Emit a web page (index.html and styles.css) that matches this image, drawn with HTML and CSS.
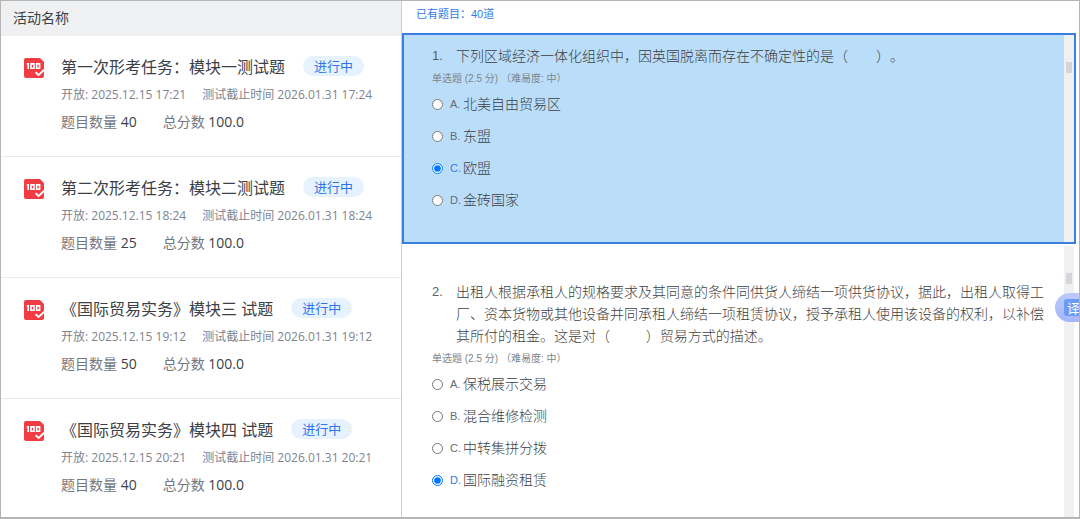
FILE: index.html
```html
<!DOCTYPE html>
<html lang="zh-CN">
<head>
  <meta charset="UTF-8">
  <meta name="viewport" content="width=device-width, initial-scale=1.0">
  <title>形考任务</title>
  <link rel="stylesheet" href="styles.css">
</head>
<body>
  <svg class="sprite" width="0" height="0" aria-hidden="true">
    <symbol id="icon-exam" viewBox="0 0 22 22">
      <path d="M3 1H17L21 5V19Q21 21 19 21H3Q1 21 1 19V3Q1 1 3 1Z" fill="#f23c43"/>
      <path d="M3.8 6.9H5.2V12M8 6.9H11V11.2H8ZM13.6 6.9H16.6V11.2H13.6Z" fill="none" stroke="#fff" stroke-width="1.6"/>
      <path d="M12.5 15.2L15.6 18L21.6 12.4" fill="none" stroke="#fff" stroke-width="1.9"/>
    </symbol>
  </svg>

  <div class="page">
    <section class="activities">
      <h2 class="activities-head">活动名称</h2>
      <ul class="activity-list">
        <li class="activity">
          <svg class="activity-icon"><use href="#icon-exam"/></svg>
          <div class="activity-body">
            <div class="activity-title"><span>第一次形考任务：模块一测试题</span><span class="badge">进行中</span></div>
            <div class="activity-time"><span>开放: 2025.12.15 17:21</span><span>测试截止时间 2026.01.31 17:24</span></div>
            <div class="activity-stats"><span>题目数量 <b>40</b></span><span>总分数 <b>100.0</b></span></div>
          </div>
        </li>
        <li class="activity">
          <svg class="activity-icon"><use href="#icon-exam"/></svg>
          <div class="activity-body">
            <div class="activity-title"><span>第二次形考任务：模块二测试题</span><span class="badge">进行中</span></div>
            <div class="activity-time"><span>开放: 2025.12.15 18:24</span><span>测试截止时间 2026.01.31 18:24</span></div>
            <div class="activity-stats"><span>题目数量 <b>25</b></span><span>总分数 <b>100.0</b></span></div>
          </div>
        </li>
        <li class="activity">
          <svg class="activity-icon"><use href="#icon-exam"/></svg>
          <div class="activity-body">
            <div class="activity-title"><span>《国际贸易实务》模块三 试题</span><span class="badge">进行中</span></div>
            <div class="activity-time"><span>开放: 2025.12.15 19:12</span><span>测试截止时间 2026.01.31 19:12</span></div>
            <div class="activity-stats"><span>题目数量 <b>50</b></span><span>总分数 <b>100.0</b></span></div>
          </div>
        </li>
        <li class="activity">
          <svg class="activity-icon"><use href="#icon-exam"/></svg>
          <div class="activity-body">
            <div class="activity-title"><span>《国际贸易实务》模块四 试题</span><span class="badge">进行中</span></div>
            <div class="activity-time"><span>开放: 2025.12.15 20:21</span><span>测试截止时间 2026.01.31 20:21</span></div>
            <div class="activity-stats"><span>题目数量 <b>40</b></span><span>总分数 <b>100.0</b></span></div>
          </div>
        </li>
      </ul>
    </section>

    <main class="questions">
      <div class="questions-head"><span>已有题目：</span><span>40道</span></div>

      <form class="question selected">
        <div class="question-body">
          <div class="question-text">
            <span class="question-no">1.</span>
            <p>下列区域经济一体化组织中，因英国脱离而存在不确定性的是（　　）。</p>
          </div>
          <div class="question-info">单选题 (2.5 分) （难易度: 中）</div>
          <label class="option"><input type="radio" name="q1"><span class="letter">A.</span><span>北美自由贸易区</span></label>
          <label class="option"><input type="radio" name="q1"><span class="letter">B.</span><span>东盟</span></label>
          <label class="option"><input type="radio" name="q1" checked><span class="letter">C.</span><span>欧盟</span></label>
          <label class="option"><input type="radio" name="q1"><span class="letter">D.</span><span>金砖国家</span></label>
        </div>
        <div class="scroll"><div class="thumb"></div></div>
      </form>

      <form class="question">
        <div class="question-body">
          <div class="question-text">
            <span class="question-no">2.</span>
            <p>出租人根据承租人的规格要求及其同意的条件同供货人缔结一项供货协议，据此，出租人取得工厂、资本货物或其他设备并同承租人缔结一项租赁协议，授予承租人使用该设备的权利，以补偿其所付的租金。这是对（　　&nbsp;&nbsp;）贸易方式的描述。</p>
          </div>
          <div class="question-info">单选题 (2.5 分) （难易度: 中）</div>
          <label class="option"><input type="radio" name="q2"><span class="letter">A.</span><span>保税展示交易</span></label>
          <label class="option"><input type="radio" name="q2"><span class="letter">B.</span><span>混合维修检测</span></label>
          <label class="option"><input type="radio" name="q2"><span class="letter">C.</span><span>中转集拼分拨</span></label>
          <label class="option"><input type="radio" name="q2" checked><span class="letter">D.</span><span>国际融资租赁</span></label>
        </div>
        <div class="scroll"><div class="thumb"></div></div>
      </form>

      <button type="button" class="translate" aria-label="翻译"><span>译</span></button>
    </main>
  </div>
</body>
</html>
```

FILE: styles.css
```css
* {
  box-sizing: border-box;
}
body {
  margin: 0;
  background: #fff;
  color: #3c3f45;
  font-family: "Open Sans", "Noto Sans CJK SC", sans-serif;
}
h2, p, ul {
  margin: 0;
  padding: 0;
}
.sprite {
  position: absolute;
}
.page {
  display: flex;
  min-height: 100vh;
  border: 1px solid #b5b5b5;
  border-bottom-width: 2px;
}

/* activity list */
.activities {
  flex: 0 0 401px;
  border-right: 1px solid #cfcfcf;
}
.activities-head {
  padding: 0 12px;
  background: #eff0f1;
  font-size: 14px;
  font-weight: 400;
  line-height: 34px;
  padding-bottom: 1px;
}
.activity-list {
  list-style: none;
}
.activity {
  display: flex;
  gap: 16px;
  padding: 19px 10px 24px 22px;
  border-bottom: 1px solid #e8e9eb;
}
.activity:last-child {
  padding-bottom: 12px;
  border-bottom: none;
}
.activity-icon {
  flex: none;
  width: 22px;
  height: 22px;
  margin-top: 2px;
}
.activity-body {
  white-space: nowrap;
}
.activity-title {
  display: flex;
  align-items: center;
  gap: 18px;
  height: 21px;
  font-size: 16px;
}
.badge {
  padding: 0 11px;
  border-radius: 10px;
  background: #e6f3ff;
  color: #2f74e8;
  font-size: 13px;
  line-height: 20px;
}
.activity-time {
  display: flex;
  gap: 16px;
  margin-top: 9px;
  color: #80848e;
  font-size: 12px;
  line-height: 20px;
}
.activity-stats {
  display: flex;
  gap: 26px;
  margin-top: 6px;
  color: #74777e;
  font-size: 14px;
  line-height: 21px;
}
.activity-stats b {
  color: #3c3f45;
  font-weight: 400;
}

/* questions */
.questions {
  position: relative;
  flex: 1;
  min-width: 0;
  display: flex;
  flex-direction: column;
  padding-right: 3px;
  overflow: hidden;
  font-family: "Liberation Sans", "Noto Sans CJK SC", sans-serif;
  text-spacing-trim: space-all;
}
.questions-head {
  display: flex;
  padding: 0 14px 6px;
  color: #3478ec;
  font-size: 11px;
  line-height: 26px;
}
.question {
  display: flex;
  border: 2px solid transparent;
}
.question:last-of-type {
  flex: 1;
  border-bottom: none;
}
.question.selected {
  border-color: #3a7fe0;
  background: #badefa;
}
.question-body {
  flex: 1;
  padding: 35px 9px 12px 28px;
}
.selected .question-body {
  padding-top: 10px;
  padding-bottom: 26px;
}
.question-text {
  display: flex;
  font-size: 14px;
  font-weight: 300;
  line-height: 22px;
}
.question-no {
  flex: 0 0 24px;
  color: #5c6066;
  font-size: 13px;
}
.question-info {
  margin: 4px 0 1px;
  color: #808489;
  font-size: 10px;
  line-height: 16px;
}
.option {
  display: flex;
  align-items: center;
  height: 32px;
  font-size: 14px;
  font-weight: 300;
  line-height: 20px;
}
.option input {
  width: 11px;
  height: 11px;
  margin: 0 7px 0 0;
}
.letter {
  width: 13px;
  color: #666a70;
  font-size: 11px;
}
.option input:checked + .letter {
  color: #3478ec;
}
.scroll {
  flex: 0 0 10px;
  background: #eff0f1;
}
.thumb {
  width: 6px;
  height: 11px;
  margin: 27px auto 0;
  background: #d3d5d8;
}

/* floating translate button */
.translate {
  position: absolute;
  top: 292px;
  right: 0;
  display: flex;
  align-items: center;
  width: 24px;
  height: 29px;
  padding: 0 0 0 9px;
  border: none;
  border-radius: 15px 0 0 15px;
  background: linear-gradient(#bccbfb, #a5b5fa);
  overflow: hidden;
}
.translate span {
  flex: none;
  width: 17px;
  padding-left: 2px;
  border-radius: 3px;
  background: #6b9bf3;
  color: #fff;
  font-family: "Noto Sans CJK SC", sans-serif;
  font-size: 13px;
  line-height: 17px;
}
```
